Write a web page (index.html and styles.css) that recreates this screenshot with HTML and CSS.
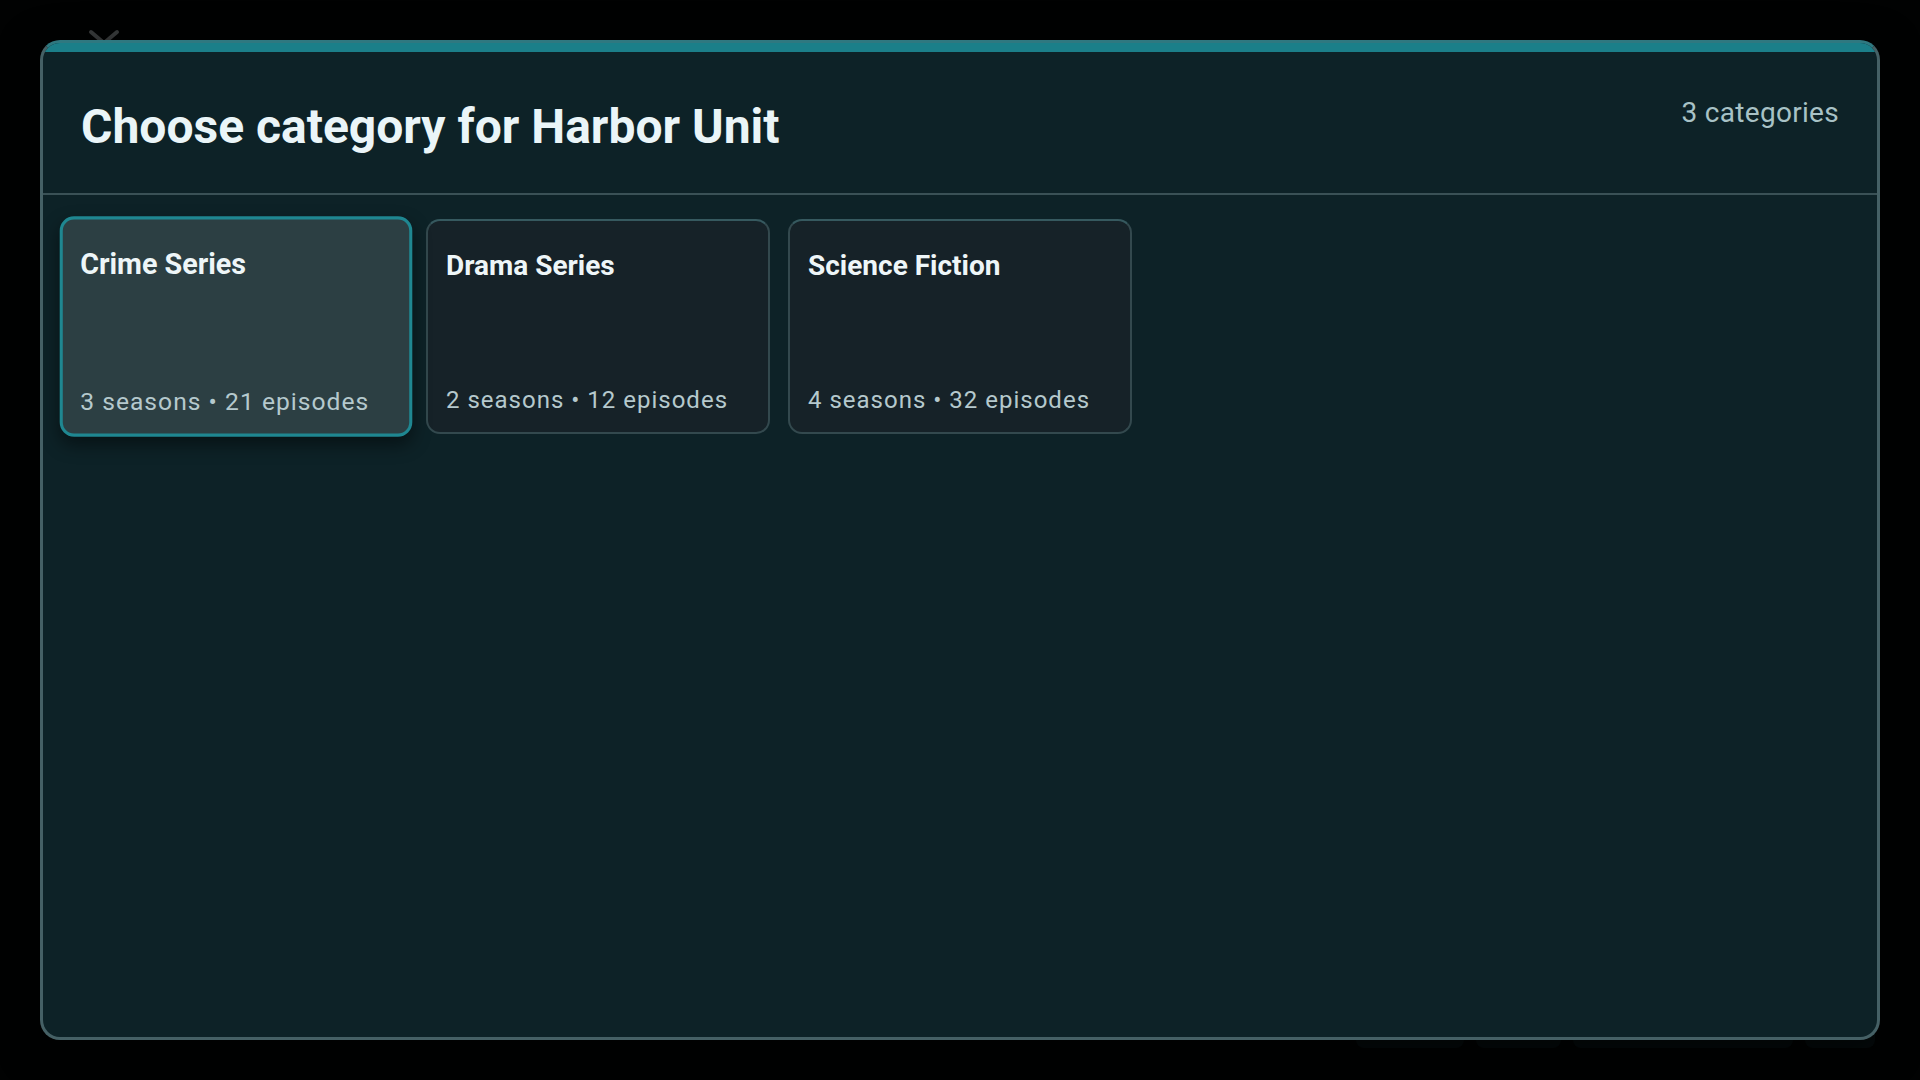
FILE: index.html
```html
<!DOCTYPE html>
<html lang="en">
<head>
<meta charset="utf-8">
<title>Choose category</title>
<link rel="stylesheet" href="styles.css">
</head>
<body>
<div class="bg-layer" aria-hidden="true">
  <svg class="bg-chevron" width="36" height="24" viewBox="0 0 36 24"><path d="M5 5 L18 16 L31 5" fill="none" stroke="#3a3d3e" stroke-width="4" stroke-linecap="round" stroke-linejoin="round"/></svg>
  <div class="bg-strip">
    <span class="bg-chip w1"></span><span class="bg-chip w2"></span><span class="bg-chip w3"></span><span class="bg-chip w4"></span>
  </div>
</div>
<div class="overlay">
  <section class="modal">
    <header class="modal-header">
      <h1 class="modal-title">Choose category for Harbor Unit</h1>
      <div class="modal-count">3 categories</div>
    </header>
    <div class="modal-body">
      <div class="card selected">
        <div class="card-title">Crime Series</div>
        <div class="card-meta">3 seasons • 21 episodes</div>
      </div>
      <div class="card">
        <div class="card-title">Drama Series</div>
        <div class="card-meta">2 seasons • 12 episodes</div>
      </div>
      <div class="card">
        <div class="card-title">Science Fiction</div>
        <div class="card-meta">4 seasons • 32 episodes</div>
      </div>
    </div>
  </section>
</div>
</body>
</html>
```

FILE: styles.css
```css
html, body {
  margin: 0;
  padding: 0;
  width: 1920px;
  height: 1080px;
  background: #010202;
  overflow: hidden;
  font-family: Roboto, "Noto Sans", "Liberation Sans", sans-serif;
}

.bg-layer {
  position: absolute;
  inset: 0;
  z-index: 0;
}

.bg-chevron {
  position: absolute;
  left: 86px;
  top: 27px;
}

.bg-strip {
  position: absolute;
  left: 1356px;
  top: 1012px;
  display: flex;
  gap: 12px;
}

.bg-chip {
  height: 36px;
  border-radius: 8px;
  background: #040a0b;
}
.bg-chip.w1 { width: 108px; }
.bg-chip.w2 { width: 85px; }
.bg-chip.w3 { width: 220px; }
.bg-chip.w4 { width: 70px; }

.overlay {
  position: relative;
  z-index: 1;
  box-sizing: border-box;
  height: 1080px;
  padding: 40px;
  display: flex;
}

.modal {
  flex: 1;
  display: flex;
  flex-direction: column;
  box-sizing: border-box;
  background: #0d2227;
  border: 3px solid #456065;
  border-top-color: #2f7880;
  border-radius: 20px;
  overflow: hidden;
  box-shadow: 0 10px 40px rgba(0, 0, 0, 0.6);
}

.modal::before {
  content: "";
  display: block;
  height: 9px;
  background: #1b7f89;
  flex: none;
}

.modal-header {
  display: flex;
  justify-content: space-between;
  align-items: flex-start;
  padding: 44px 38px 36px 38px;
  border-bottom: 2px solid #3a5156;
}

.modal-title {
  margin: 0;
  font-size: 48px;
  line-height: 61px;
  font-weight: 700;
  color: #eaf5f8;
}

.modal-count {
  font-size: 28px;
  line-height: 34px;
  color: #a8c2c6;
  letter-spacing: 0.3px;
}

.modal-body {
  display: flex;
  align-items: flex-start;
  gap: 18px;
  padding: 24px 21px;
}

.card {
  width: 344px;
  height: 215px;
  box-sizing: border-box;
  display: flex;
  flex-direction: column;
  justify-content: space-between;
  padding: 28px 18px 17px 18px;
  background: #162228;
  border: 2px solid #33494e;
  border-top-color: #36595f;
  border-radius: 14px;
}

.card.selected {
  background: #2c3f43;
  border: 3px solid #1f8791;
  padding: 27px 17px 16px 17px;
  transform: scale(1.025);
  box-shadow: 0 8px 18px rgba(0, 0, 0, 0.45);
}

.card-title {
  font-size: 28px;
  line-height: 33px;
  font-weight: 700;
  color: #eef6f8;
}

.card-meta {
  font-size: 24px;
  line-height: 29px;
  color: #b5c9cd;
  letter-spacing: 1px;
}
```
